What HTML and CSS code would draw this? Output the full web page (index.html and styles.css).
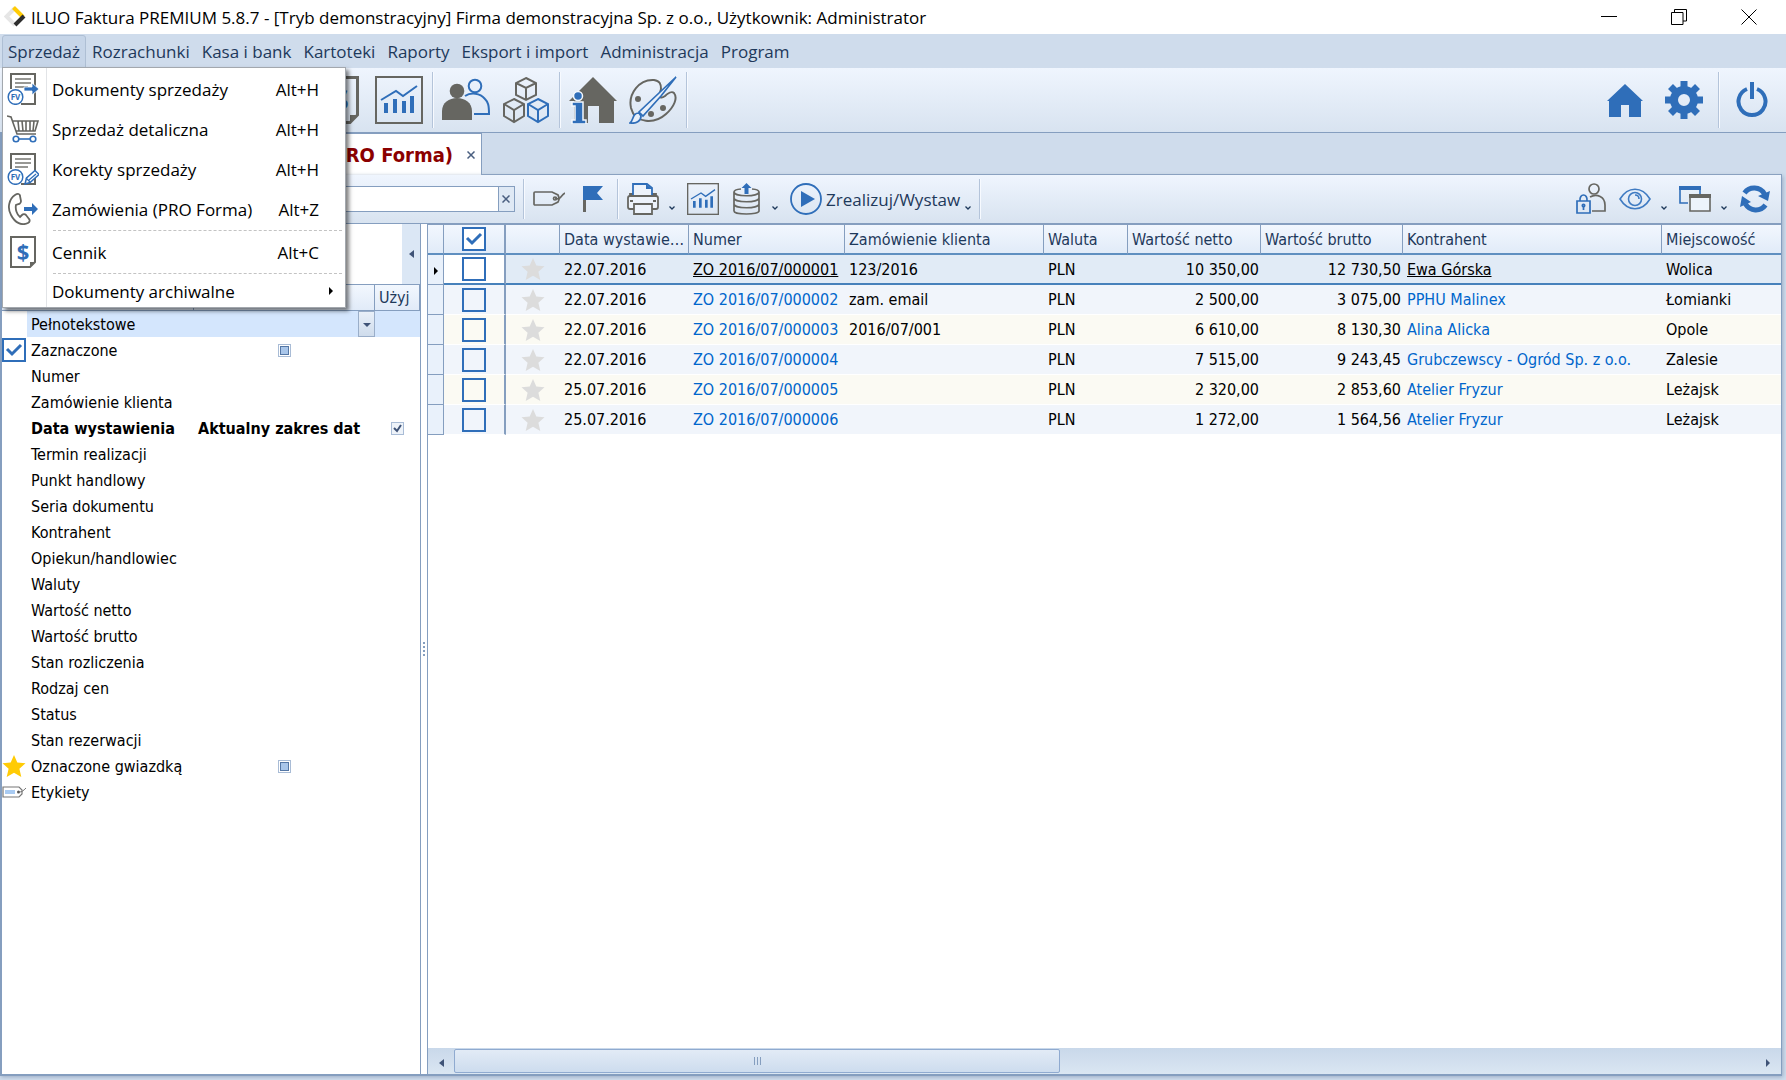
FILE: index.html
```html
<!DOCTYPE html>
<html lang="pl">
<head>
    <meta charset="UTF-8">
    <meta name="viewport" content="width=device-width, initial-scale=1.0">
    <title>ILUO Faktura PREMIUM 5.8.7</title>
    <link rel="stylesheet" href="styles.css">
</head>
<body>

<!-- shared icons -->
<svg class="defs" width="0" height="0">
    <symbol id="i-chart" viewBox="0 0 48 48">
        <rect x="1" y="1" width="46" height="46" fill="none" stroke="#666661" stroke-width="2"/>
        <path d="M6 24 21 15l7 5L42 10" fill="none" stroke="#2f6eb9" stroke-width="2"/>
        <path d="M9 27h4v10H9zM18 23h4v14h-4zM27 25h4v12h-4zM35 20h4v17h-4z" fill="#2f6eb9"/>
    </symbol>
    <symbol id="i-star" viewBox="0 0 24 24">
        <path d="M12 1l3.300 7.500 8.200.700-6.100 5.600 1.900 8.200-7.300-4.300L4.700 23l1.900-8.200L.500 9.200l8.200-.700z"/>
    </symbol>
    <symbol id="i-caret" viewBox="0 0 6 4">
        <path d="M.5.5 3 3 5.500.5" fill="none" stroke="#1e395b" stroke-width="1.300"/>
    </symbol>
    <symbol id="i-doc" viewBox="0 0 32 32">
        <path d="M4 16V1h24v30H14" fill="none" stroke="#666661" stroke-width="2"/>
        <path d="M8 6h16M8 10h16M8 14h13" stroke="#777772" stroke-width="1.500"/>
        <circle cx="8.500" cy="24" r="7.300" fill="#fff" stroke="#2f6eb9" stroke-width="1.500"/>
        <text x="8.500" y="27" text-anchor="middle" class="fv">FV</text>
    </symbol>
    <symbol id="i-price" viewBox="0 0 26 32">
        <path d="M1 1h24v25l-5 5H1z" fill="none" stroke="#666661" stroke-width="2"/>
        <path d="M25 26h-5v5z" fill="#666661"/>
        <text x="13" y="24" text-anchor="middle" class="dollar">$</text>
    </symbol>
</svg>

<header class="titlebar">
    <svg class="logo" viewBox="0 0 22 22">
        <path d="M11 2 2.500 10.500 11 19" fill="none" stroke="#e6e6e6" stroke-width="4"/>
        <path d="M9.500 1.500 19 11" fill="none" stroke="#ffcb05" stroke-width="4"/>
        <path d="M20 10l-9 9" fill="none" stroke="#2d2d2d" stroke-width="4"/>
    </svg>
    <h1>ILUO Faktura PREMIUM 5.8.7 - [Tryb demonstracyjny] Firma demonstracyjna Sp. z o.o., Użytkownik: Administrator</h1>
    <div class="window-buttons">
        <button type="button" aria-label="Minimalizuj"><svg viewBox="0 0 16 16"><path d="M0 7.500h16"/></svg></button>
        <button type="button" aria-label="Przywróć"><svg viewBox="0 0 16 16"><path d="M.5 3.500h11.500v12H.5zM3.500 3.500v-3h12v11.500H12"/></svg></button>
        <button type="button" aria-label="Zamknij"><svg viewBox="0 0 16 16"><path d="M.5.5l15 15M15.500.5l-15 15"/></svg></button>
    </div>
</header>

<nav class="menubar">
    <div class="menu-root">
        <button type="button" class="active">Sprzedaż</button>
        <div class="dropdown">
            <button type="button" class="menu-item">
                <svg viewBox="0 0 32 32"><use href="#i-doc"/><path d="M17 14h8v-4l7 6-7 6v-4h-8z" fill="#2f6eb9" stroke="#fff" stroke-width=".8"/></svg>
                <span>Dokumenty sprzedaży</span><kbd>Alt+H</kbd>
            </button>
            <button type="button" class="menu-item">
                <svg viewBox="0 0 32 32" fill="none" stroke="#666661" stroke-width="1.600"><path d="M0 3l4 1 6 17h19M6 8h25l-3 10H9M11 8l1 10M15 8l1 10M19 8v10M23 8v10M27 8l-1 10"/><g stroke="#2f6eb9"><circle cx="9" cy="26" r="2.800"/><circle cx="26" cy="26" r="2.800"/><path d="M12 26h11"/></g></svg>
                <span>Sprzedaż detaliczna</span><kbd>Alt+H</kbd>
            </button>
            <button type="button" class="menu-item">
                <svg viewBox="0 0 32 32"><use href="#i-doc"/><path d="M18 31l1.500-6L28 17.500l4 4-9 8z" fill="#fff" stroke="#2f6eb9" stroke-width="1.500"/><path d="M22 27l7-6M19 25l4 4" stroke="#2f6eb9" stroke-width="1.200"/></svg>
                <span>Korekty sprzedaży</span><kbd>Alt+H</kbd>
            </button>
            <button type="button" class="menu-item">
                <svg viewBox="0 0 32 32"><path d="M8 2C2 6 0 15 4 22c4 8 11 11 17 8 2-1 2-3 1-4l-3-4c-1-1-3-1-4 0l-2 2c-3-2-5-8-4-12l3-1c1 0 2-2 2-3l-1-5c0-2-2-3-5-1z" fill="none" stroke="#666661" stroke-width="1.800"/><path d="M17 14h8v-4l6 6-6 6v-4h-8z" fill="#2f6eb9"/></svg>
                <span>Zamówienia (PRO Forma)</span><kbd>Alt+Z</kbd>
            </button>
            <hr>
            <button type="button" class="menu-item">
                <svg viewBox="0 0 26 32"><use href="#i-price"/></svg>
                <span>Cennik</span><kbd>Alt+C</kbd>
            </button>
            <hr>
            <button type="button" class="menu-item short">
                <i></i>
                <span>Dokumenty archiwalne</span><b class="tri-right"></b>
            </button>
        </div>
    </div>
    <button type="button">Rozrachunki</button>
    <button type="button">Kasa i bank</button>
    <button type="button">Kartoteki</button>
    <button type="button">Raporty</button>
    <button type="button">Eksport i import</button>
    <button type="button">Administracja</button>
    <button type="button">Program</button>
</nav>

<div class="toolbar main-toolbar">
    <div class="tools-left">
        <button type="button" class="tool" aria-label="Cennik"><svg width="39" height="48" viewBox="0 0 26 32"><use href="#i-price"/></svg></button>
        <button type="button" class="tool" aria-label="Raporty"><svg width="48" height="48"><use href="#i-chart"/></svg></button>
        <span class="sep"></span>
        <button type="button" class="tool" aria-label="Kontrahenci">
            <svg width="48" height="48" viewBox="0 0 48 48"><g fill="none" stroke="#2f6eb9" stroke-width="2"><circle cx="33" cy="10" r="6.300"/><path d="M23 20c6-4 15-3 20 3 3 3 4 6 4 15H32"/></g><circle cx="15" cy="15" r="7.300" fill="#666661"/><path d="M0 44V35C0 27 7 22 15 22s15 5 15 13v9z" fill="#666661"/></svg>
        </button>
        <button type="button" class="tool" aria-label="Magazyn">
            <svg width="48" height="48" viewBox="0 0 48 48" fill="none" stroke="#666661" stroke-width="2"><path d="M24 2l10 5v12l-10 5-10-5V7zM14 7l10 5 10-5M24 12v12"/><path d="M12 23l10 5v12l-10 6-10-6V28zM2 28l10 6 10-6M12 34v12"/><path d="M36 23l10 5v12l-10 6-10-6V28zM26 28l10 6 10-6M36 34v12" stroke="#2f6eb9"/></svg>
        </button>
        <span class="sep"></span>
        <button type="button" class="tool" aria-label="Firma">
            <svg width="48" height="48" viewBox="0 0 48 48"><path d="M24 1l24 24h-3v22H30V30H19v17H5V25H0z" fill="#666661"/><g fill="#2f6eb9" stroke="#f4f8fd" stroke-width="1.500"><circle cx="9" cy="20" r="4.500"/><path d="M3 26h11v18h3v4H3v-4h3V30H3z"/></g></svg>
        </button>
        <button type="button" class="tool" aria-label="Wygląd">
            <svg width="48" height="48" viewBox="0 0 48 48"><path d="M32 13c0-5-1-8-7-9C10 3-1 18 2 32c4 16 24 16 35 6 8-7 12-16 8-21-2-2-6 0-9 3-4 3-7 2-4-7z" fill="none" stroke="#666661" stroke-width="2"/><g fill="#666661"><circle cx="9" cy="23" r="3"/><circle cx="22" cy="38" r="3"/><circle cx="34" cy="32" r="3"/></g><path d="M47 1L30 17 10 36l4 4L32 20z" fill="#e8f0fa" stroke="#2f6eb9" stroke-width="1.700"/><path d="M10 37c-7 0-5 7-9 10 6 1 11-2 11-7z" fill="#e8f0fa" stroke="#2f6eb9" stroke-width="1.700"/></svg>
        </button>
        <span class="sep"></span>
    </div>
    <div class="tools-right">
        <button type="button" class="tool" aria-label="Strona główna">
            <svg width="36" height="36" viewBox="0 0 36 36"><path d="M18 2l18 17h-2v16H22V23h-8v12H2V19H0z" fill="#2f6eb9"/></svg>
        </button>
        <button type="button" class="tool" aria-label="Ustawienia">
            <svg width="38" height="38" viewBox="0 0 38 38"><circle cx="19" cy="19" r="10" fill="none" stroke="#2f6eb9" stroke-width="8"/><path d="M19 0v10M19 28v10M0 19h10M28 19h10M5.500 5.500l7 7M25.500 25.500l7 7M5.500 32.500l7-7M25.500 12.500l7-7" stroke="#2f6eb9" stroke-width="7"/></svg>
        </button>
        <span class="sep"></span>
        <button type="button" class="tool" aria-label="Zakończ">
            <svg width="32" height="38" viewBox="0 0 32 38" fill="none" stroke="#2f6eb9" stroke-width="4"><path d="M11 8a13.500 13.500 0 1 0 10 0M16 1v17"/></svg>
        </button>
    </div>
</div>

<div class="tabs">
    <div class="tab"><span>Zamówienia (PRO Forma)</span><button type="button" aria-label="Zamknij kartę"><svg viewBox="0 0 8 8"><path d="M.5.5l7 7M7.500.5l-7 7"/></svg></button></div>
    <div class="tab-space"></div>
</div>

<main class="panel">
    <div class="toolbar panel-toolbar">
        <div class="tools-left">
            <div class="search">
                <input type="text" aria-label="Szukaj">
                <button type="button" aria-label="Wyczyść"><svg viewBox="0 0 8 8"><path d="M.5.5l7 7M7.500.5l-7 7"/></svg></button>
            </div>
            <span class="sep"></span>
            <button type="button" class="tool" aria-label="Etykieta">
                <svg width="32" height="32" viewBox="0 0 32 32" fill="none" stroke="#666661" stroke-width="1.700"><path d="M2 9h17l6 3q2 4 0 7l-6 3H2q-1 0-1-1V10q0-1 1-1z"/><circle cx="22" cy="15.500" r="1.500"/><path d="M22 15c6 3 5-2 10-5"/></svg>
            </button>
            <button type="button" class="tool flag" aria-label="Flaga">
                <svg width="32" height="32" viewBox="0 0 32 32"><path d="M6 16h3v13H6z" fill="#666661"/><path d="M6 3h20l-6 7 6 7H6z" fill="#2f6eb9"/></svg>
            </button>
            <span class="sep"></span>
            <button type="button" class="tool" aria-label="Drukuj">
                <svg width="32" height="32" viewBox="0 0 32 32" fill="#edf3fb" stroke="#666661" stroke-width="1.800"><path d="M3 11h26v4H3z"/><path d="M6 14V1h14l5 4v9" stroke="#2f6eb9"/><path d="M19 1v5h6z" fill="#2f6eb9" stroke="none"/><path d="M3 13h26q2 0 2 2v9q0 2-2 2H3q-2 0-2-2v-9q0-2 2-2z"/><path d="M7 21h18v10H7z"/><path d="M3 18h3M26 18h3"/></svg>
            </button>
            <svg class="caret"><use href="#i-caret"/></svg>
            <button type="button" class="tool" aria-label="Wykres"><svg width="32" height="32"><use href="#i-chart"/></svg></button>
            <button type="button" class="tool export" aria-label="Eksport">
                <svg width="32" height="32" viewBox="0 0 32 32" fill="none" stroke="#666661" stroke-width="1.700"><path d="M11 6C6 6.500 4 7.500 4 9c0 5 25 5 25 0 0-1.500-2-2.500-7-3M4 9v19c0 4 25 4 25 0V9M4 15c0 5 25 5 25 0M4 21c0 5 25 5 25 0"/><path d="M16.500 0l5 5h-3v6h-4V5h-3z" fill="#2f6eb9" stroke="none"/></svg>
            </button>
            <svg class="caret"><use href="#i-caret"/></svg>
            <button type="button" class="tool issue">
                <svg width="32" height="32" viewBox="0 0 32 32"><circle cx="16" cy="16" r="15" fill="none" stroke="#2f6eb9" stroke-width="1.800"/><path d="M11 8l14 8-14 8z" fill="#2f6eb9"/></svg>
                <span>Zrealizuj/Wystaw</span>
            </button>
            <svg class="caret near"><use href="#i-caret"/></svg>
            <span class="sep"></span>
        </div>
        <div class="tools-right">
            <button type="button" class="tool lock" aria-label="Uprawnienia">
                <svg width="32" height="32" viewBox="0 0 32 32" fill="none" stroke="#666661" stroke-width="1.700"><circle cx="19" cy="6" r="5"/><path d="M15 14c7-4 15 0 15 8v6H17"/><g stroke="#2f6eb9"><path d="M2 18h13v12H2zM5 18c-1-8 8-8 7 0"/><circle cx="8.500" cy="22.500" r="1.200"/><path d="M8.500 23v4"/></g></svg>
            </button>
            <button type="button" class="tool" aria-label="Widok">
                <svg width="32" height="32" viewBox="0 0 32 32" fill="none" stroke="#3f7bc2" stroke-width="1.600"><path d="M1 16C9 3 23 3 31 16 23 29 9 29 1 16z"/><circle cx="16" cy="16" r="6.500"/><path d="M16 12q4 0 4 4"/></svg>
            </button>
            <svg class="caret"><use href="#i-caret"/></svg>
            <button type="button" class="tool" aria-label="Okna">
                <svg width="32" height="32" viewBox="0 0 32 32" fill="none"><path d="M9 20H1V4h20v7" stroke="#2f6eb9" stroke-width="1.600"/><path d="M0 3h22v4H0z" fill="#2f6eb9"/><path d="M11 12h20v16H11z" fill="#edf3fb" stroke="#666661" stroke-width="1.600"/><path d="M10 11h22v4H10z" fill="#666661"/></svg>
            </button>
            <svg class="caret"><use href="#i-caret"/></svg>
            <button type="button" class="tool" aria-label="Odśwież">
                <svg width="32" height="32" viewBox="0 0 32 32"><path d="M5.500 10a12 12 0 0 1 20 1M26.500 22a12 12 0 0 1-20-1" fill="none" stroke="#2f6eb9" stroke-width="5"/><path d="M31 8l-2 10-10-5zM1 24l2-11 9 6z" fill="#2f6eb9"/></svg>
            </button>
        </div>
    </div>

    <div class="content">
        <aside class="sidebar">
            <div class="sidebar-top"><button type="button" class="collapse" aria-label="Zwiń"><b class="tri-left"></b></button></div>
            <table class="filters">
                <colgroup><col class="f-icon"><col class="f-name"><col class="f-value"><col></colgroup>
                <thead><tr><th></th><th></th><th></th><th>Użyj</th></tr></thead>
                <tbody>
                    <tr class="current"><td></td><td>Pełnotekstowe</td><td class="with-button"><button type="button" aria-label="Rozwiń"><b class="tri-down"></b></button></td><td></td></tr>
                    <tr><td><input type="checkbox" class="check" aria-label="Zaznaczone wiersze" checked></td><td>Zaznaczone</td><td><input type="checkbox" class="mini mixed" aria-label="Zaznaczone"></td><td></td></tr>
                    <tr><td></td><td>Numer</td><td></td><td></td></tr>
                    <tr><td></td><td>Zamówienie klienta</td><td></td><td></td></tr>
                    <tr class="used"><td></td><td>Data wystawienia</td><td>Aktualny zakres dat</td><td><input type="checkbox" class="mini" aria-label="Użyj daty wystawienia" checked></td></tr>
                    <tr><td></td><td>Termin realizacji</td><td></td><td></td></tr>
                    <tr><td></td><td>Punkt handlowy</td><td></td><td></td></tr>
                    <tr><td></td><td>Seria dokumentu</td><td></td><td></td></tr>
                    <tr><td></td><td>Kontrahent</td><td></td><td></td></tr>
                    <tr><td></td><td>Opiekun/handlowiec</td><td></td><td></td></tr>
                    <tr><td></td><td>Waluty</td><td></td><td></td></tr>
                    <tr><td></td><td>Wartość netto</td><td></td><td></td></tr>
                    <tr><td></td><td>Wartość brutto</td><td></td><td></td></tr>
                    <tr><td></td><td>Stan rozliczenia</td><td></td><td></td></tr>
                    <tr><td></td><td>Rodzaj cen</td><td></td><td></td></tr>
                    <tr><td></td><td>Status</td><td></td><td></td></tr>
                    <tr><td></td><td>Stan rezerwacji</td><td></td><td></td></tr>
                    <tr><td><svg class="star gold"><use href="#i-star"/></svg></td><td>Oznaczone gwiazdką</td><td><input type="checkbox" class="mini mixed" aria-label="Oznaczone gwiazdką"></td><td></td></tr>
                    <tr><td><svg class="label-icon" viewBox="0 0 24 12"><path d="M1 1h16l3 3v4l-3 3H1z" fill="#fff" stroke="#777" stroke-width="1.200"/><path d="M3 4h10v4H3z" fill="#a9cbf2"/><circle cx="16.500" cy="6" r="1.500" fill="#555"/><path d="M17 6c3 0 4-1 7-4" fill="none" stroke="#777"/></svg></td><td>Etykiety</td><td></td><td></td></tr>
                </tbody>
            </table>
        </aside>
        <div class="splitter"></div>
        <section class="grid">
            <table class="orders">
                <colgroup><col class="c-mark"><col class="c-check"><col class="c-star"><col class="c-date"><col class="c-number"><col class="c-order"><col class="c-currency"><col class="c-net"><col class="c-gross"><col class="c-client"><col></colgroup>
                <thead>
                    <tr><th></th><th><input type="checkbox" class="check" aria-label="Zaznacz wszystkie" checked></th><th></th><th>Data wystawienia</th><th>Numer</th><th>Zamówienie klienta</th><th>Waluta</th><th>Wartość netto</th><th>Wartość brutto</th><th>Kontrahent</th><th>Miejscowość</th></tr>
                </thead>
                <tbody>
                    <tr class="selected"><td><b class="tri-right"></b></td><td><input type="checkbox" class="check" aria-label="Zaznacz wiersz 1"></td><td><svg class="star"><use href="#i-star"/></svg></td><td>22.07.2016</td><td><a href="#">ZO 2016/07/000001</a></td><td>123/2016</td><td>PLN</td><td class="num">10 350,00</td><td class="num">12 730,50</td><td><a href="#">Ewa Górska</a></td><td>Wolica</td></tr>
                    <tr><td></td><td><input type="checkbox" class="check" aria-label="Zaznacz wiersz 2"></td><td><svg class="star"><use href="#i-star"/></svg></td><td>22.07.2016</td><td><a href="#">ZO 2016/07/000002</a></td><td>zam. email</td><td>PLN</td><td class="num">2 500,00</td><td class="num">3 075,00</td><td><a href="#">PPHU Malinex</a></td><td>Łomianki</td></tr>
                    <tr><td></td><td><input type="checkbox" class="check" aria-label="Zaznacz wiersz 3"></td><td><svg class="star"><use href="#i-star"/></svg></td><td>22.07.2016</td><td><a href="#">ZO 2016/07/000003</a></td><td>2016/07/001</td><td>PLN</td><td class="num">6 610,00</td><td class="num">8 130,30</td><td><a href="#">Alina Alicka</a></td><td>Opole</td></tr>
                    <tr><td></td><td><input type="checkbox" class="check" aria-label="Zaznacz wiersz 4"></td><td><svg class="star"><use href="#i-star"/></svg></td><td>22.07.2016</td><td><a href="#">ZO 2016/07/000004</a></td><td></td><td>PLN</td><td class="num">7 515,00</td><td class="num">9 243,45</td><td><a href="#">Grubczewscy - Ogród Sp. z o.o.</a></td><td>Zalesie</td></tr>
                    <tr><td></td><td><input type="checkbox" class="check" aria-label="Zaznacz wiersz 5"></td><td><svg class="star"><use href="#i-star"/></svg></td><td>25.07.2016</td><td><a href="#">ZO 2016/07/000005</a></td><td></td><td>PLN</td><td class="num">2 320,00</td><td class="num">2 853,60</td><td><a href="#">Atelier Fryzur</a></td><td>Leżajsk</td></tr>
                    <tr><td></td><td><input type="checkbox" class="check" aria-label="Zaznacz wiersz 6"></td><td><svg class="star"><use href="#i-star"/></svg></td><td>25.07.2016</td><td><a href="#">ZO 2016/07/000006</a></td><td></td><td>PLN</td><td class="num">1 272,00</td><td class="num">1 564,56</td><td><a href="#">Atelier Fryzur</a></td><td>Leżajsk</td></tr>
                </tbody>
            </table>
            <div class="scrollbar">
                <button type="button" aria-label="Przewiń w lewo"><b class="tri-left"></b></button>
                <div class="track"><div class="thumb"><i></i></div></div>
                <button type="button" aria-label="Przewiń w prawo"><b class="tri-right"></b></button>
            </div>
        </section>
    </div>
</main>

</body>
</html>
```
FILE: styles.css
```css
* {
    box-sizing: border-box;
}
body {
    margin: 0;
    min-height: 100vh;
    display: flex;
    flex-direction: column;
    background: #cfdcec;
    color: #000;
    font-family: "Open Sans", "Noto Sans", sans-serif;
    font-size: 17px;
}
button {
    margin: 0;
    padding: 0;
    border: 0;
    background: none;
    color: inherit;
    font: inherit;
}
svg {
    display: block;
}
.defs {
    display: none;
}
.fv {
    font: bold 8px "Open Sans", sans-serif;
    fill: #2f6eb9;
}
.dollar {
    font: bold 22px "Open Sans", sans-serif;
    fill: #2f6eb9;
}

/* title bar */
.titlebar {
    display: flex;
    height: 34px;
    padding: 0 2px 0 4px;
    background: #fff;
}
.titlebar h1 {
    flex: 1;
    margin: 0 0 0 5px;
    font-size: 17px;
    font-weight: normal;
    line-height: 35px;
    white-space: nowrap;
}
.logo {
    width: 22px;
    height: 22px;
    margin-top: 6px;
}
.window-buttons {
    display: flex;
}
.window-buttons button {
    width: 70px;
    height: 33px;
    display: flex;
    align-items: center;
    justify-content: center;
}
.window-buttons svg {
    width: 16px;
    height: 16px;
    fill: none;
    stroke: #000;
}

/* menu */
.menubar {
    display: flex;
    height: 34px;
    padding: 1px 2px 0;
    color: #1e395b;
}
.menubar > button, .menu-root > button {
    height: 33px;
    padding: 0 5px;
    border: 1px solid transparent;
    border-radius: 3px 3px 0 0;
}
.menu-root > .active {
    border-color: #aebfd4;
    background: #c6d5e8;
}
.menu-root {
    position: relative;
}
.dropdown {
    position: absolute;
    z-index: 10;
    top: 32px;
    left: 0;
    width: 344px;
    padding-top: 1px;
    border: 1px solid #a3a8ae;
    background: linear-gradient(to right, #fff 43px, #e2e4e7 43px, #e2e4e7 44px, #fff 44px);
    box-shadow: 3px 3px 4px rgba(0, 0, 0, 0.5);
    color: #000;
}
.menu-item {
    display: flex;
    align-items: center;
    width: 100%;
    height: 40px;
    padding: 0 26px 0 4px;
    text-align: left;
}
.menu-item.short {
    height: 32px;
    padding-right: 12px;
}
.menu-item svg, .menu-item i {
    width: 32px;
    height: 32px;
}
.menu-item span {
    flex: 1;
    margin-left: 13px;
}
.menu-item kbd {
    font: inherit;
}
.dropdown hr {
    margin: 1px 3px 1px 50px;
    border: 0;
    border-top: 1px dashed #c3c3c3;
}

/* toolbars */
.toolbar {
    display: flex;
    justify-content: space-between;
    background: linear-gradient(#eff5fe, #d8e3f0);
}
.tools-left, .tools-right {
    display: flex;
    align-items: center;
}
.main-toolbar {
    height: 65px;
    border-bottom: 1px solid #859ebf;
    padding: 0 18px 0 320px;
}
.main-toolbar .tools-left {
    gap: 12px;
}
.main-toolbar .tools-left .tool:first-child {
    margin-right: 4px;
}
.main-toolbar .tools-right {
    gap: 22px;
}
.sep {
    width: 2px;
    height: 56px;
    border-left: 1px solid #b4c4da;
    border-right: 1px solid #f7faff;
}
.main-toolbar .tools-left .sep {
    margin: 0 -4px 0 -3px;
}
.main-toolbar .tools-right .sep {
    margin: 0 -6px 0 -7px;
}

/* tabs */
.tabs {
    display: flex;
    height: 42px;
}
.tab {
    display: flex;
    align-items: center;
    justify-content: flex-end;
    gap: 14px;
    width: 482px;
    padding-right: 6px;
    border: 1px solid #859ebf;
    border-width: 1px 1px 0 2px;
    background: #fff;
    color: #8b0000;
    font: bold 20px "DejaVu Sans Condensed", "Noto Sans", sans-serif;
}
.tab-space {
    flex: 1;
    margin-right: 4px;
    border-bottom: 1px solid #859ebf;
}
.tab svg, .search svg {
    width: 8px;
    height: 8px;
    stroke: #4a5f80;
    stroke-width: 1.5;
}

/* panel */
.panel {
    flex: 1;
    display: flex;
    flex-direction: column;
    margin: 0 4px 4px 0;
    border: 2px solid #859ebf;
    border-width: 0 1px 2px 2px;
    background: #fff;
    box-shadow: 1px 1px 4px #9aabc4;
}
.panel-toolbar {
    height: 49px;
    padding: 0 10px 0 6px;
    border-bottom: 1px solid #859ebf;
}
.panel-toolbar .tools-left, .panel-toolbar .tools-right {
    gap: 8px;
}
.panel-toolbar .sep {
    height: 40px;
}
.search {
    display: flex;
    width: 507px;
    height: 26px;
    border: 1px solid #859ebf;
    background: #fff;
}
.search input {
    flex: 1;
    min-width: 0;
    padding: 0 4px;
    border: 0;
    font: inherit;
}
.search button {
    width: 16px;
    padding: 0 3px;
    border-left: 1px solid #859ebf;
    background: #dfe9f5;
}
.flag {
    margin-left: 4px;
}
.export {
    margin-left: 3px;
}
.lock {
    margin-right: 4px;
}
.caret {
    width: 6px;
    height: 4px;
    margin: 18px 4px 0 2px;
}
.caret.near {
    margin: 18px 0 0 -3px;
}
.issue {
    display: flex;
    align-items: center;
    gap: 4px;
    color: #1e395b;
}

/* filters */
.content {
    flex: 1;
    display: flex;
}
.sidebar {
    width: 419px;
    border-right: 1px solid #859ebf;
    font: 16px "DejaVu Sans Condensed", "Noto Sans", sans-serif;
}
.sidebar-top {
    display: flex;
    justify-content: flex-end;
    height: 60px;
}
.collapse {
    display: flex;
    align-items: center;
    justify-content: center;
    width: 18px;
    background: #dbe7f5;
}
.filters, .orders {
    width: 100%;
    border-spacing: 0;
    table-layout: fixed;
    white-space: nowrap;
}
.f-icon {
    width: 25px;
}
.f-name {
    width: 167px;
}
.f-value {
    width: 181px;
}
.filters th {
    height: 27px;
    padding: 0 0 0 4px;
    border: 1px solid #859ebf;
    border-left: 0;
    background: linear-gradient(#f2f7fe, #e1ebf8);
    color: #1e395b;
    font-weight: normal;
    text-align: left;
}
.filters th:first-child {
    border-right: 0;
}
.filters td {
    height: 26px;
    padding: 0 0 0 4px;
}
.filters td:first-child {
    padding: 0;
}
.filters .current td:not(:first-child) {
    background: #d4e6fd;
}
.filters .used {
    font-weight: bold;
}
.filters .with-button {
    text-align: right;
}
.with-button button {
    width: 17px;
    height: 26px;
    border: 1px solid #9aaec9;
    background: linear-gradient(#e9f0f9, #cfdcec);
    vertical-align: top;
}
.tri-left, .tri-right, .tri-down {
    display: inline-block;
    border: 4px solid transparent;
}
.tri-left {
    border-right: 5px solid #3f5377;
    border-left: 0;
}
.tri-right {
    border-left: 4px solid #000;
    border-right: 0;
}
.tri-down {
    border-top: 4px solid #3f5377;
    border-bottom: 0;
    vertical-align: middle;
}
.check {
    display: block;
    appearance: none;
    width: 24px;
    height: 24px;
    margin: 0 auto;
    border: 2px solid #2f6eb9;
    background: #fff center / 20px no-repeat;
}
tbody tr:not(.selected) .check {
    background-color: transparent;
}
.check:checked {
    background-image: url("data:image/svg+xml,%3Csvg xmlns='http://www.w3.org/2000/svg' viewBox='0 0 20 20'%3E%3Cpath d='M3 9l5 5 9-9' fill='none' stroke='%232f6eb9' stroke-width='3'/%3E%3C/svg%3E");
}
.mini {
    display: block;
    appearance: none;
    width: 13px;
    height: 13px;
    margin: 0 auto;
    border: 1px solid #a9bcd6;
    background: #eef3f9 center / 11px no-repeat;
}
.mini.mixed {
    box-shadow: inset 0 0 0 1px #fff, inset 0 0 0 2px #5577a5;
    background: #a9c6ea;
}
.mini:checked {
    background-image: url("data:image/svg+xml,%3Csvg xmlns='http://www.w3.org/2000/svg' viewBox='0 0 11 11'%3E%3Cpath d='M2 5l3 3 4-6' fill='none' stroke='%233f5377' stroke-width='2'/%3E%3C/svg%3E");
}
.filters td:has(.mini) {
    padding: 0;
}
.star {
    width: 24px;
    height: 24px;
    margin: 0 auto;
    fill: #dcdcdc;
}
.star.gold {
    fill: #ffcb05;
}
.filters .star, .filters .check {
    margin: 0;
}
.label-icon {
    width: 24px;
    height: 12px;
}
.splitter {
    display: flex;
    align-items: center;
    justify-content: center;
    width: 6px;
}
.splitter::before {
    content: "";
    width: 2px;
    height: 14px;
    background: repeating-linear-gradient(#859ebf 0 2px, transparent 2px 4px);
}

/* orders */
.grid {
    flex: 1;
    display: flex;
    flex-direction: column;
    justify-content: space-between;
    border-top: 1px solid #859ebf;
    border-left: 1px solid #859ebf;
    font: 16px "DejaVu Sans Condensed", "Noto Sans", sans-serif;
}
.c-mark {
    width: 16px;
}
.c-check {
    width: 62px;
}
.c-star {
    width: 54px;
}
.c-date {
    width: 129px;
}
.c-number {
    width: 156px;
}
.c-order {
    width: 199px;
}
.c-currency {
    width: 84px;
}
.c-net {
    width: 133px;
}
.c-gross {
    width: 142px;
}
.c-client {
    width: 259px;
}
.orders th {
    height: 30px;
    padding: 0 0 0 4px;
    border-right: 1px solid #859ebf;
    border-bottom: 2px solid #5f8fc0;
    background: linear-gradient(#f2f7fe, #e1ebf8);
    color: #1e395b;
    font-weight: normal;
    text-align: left;
    overflow: hidden;
    text-overflow: ellipsis;
}
.orders th:last-child {
    border-right: 0;
}
.orders td {
    height: 30px;
    padding: 0 0 0 4px;
    border-bottom: 1px solid #fff;
    background: #f1f5fb;
}
.orders tr:nth-child(odd) td {
    background: #fbfaf3;
}
.orders tr td:first-child {
    padding: 0;
    border-right: 1px solid #859ebf;
    border-bottom: 1px solid #859ebf;
    background: #e9f1fb;
    line-height: 16px;
    text-align: center;
}
.orders th:nth-child(2), .orders td:nth-child(2) {
    padding: 0;
    border-right: 2px solid #859ebf;
}
.orders td:nth-child(3) {
    padding: 0;
}
.orders tbody .selected td:not(:first-child) {
    border-bottom: 2px solid #4781bb;
    background: #e1ebf6;
}
.orders tbody .selected td:nth-child(2) {
    background: #fff;
}
.orders td.num {
    padding: 0 2px 0 0;
    text-align: right;
}
.orders a {
    color: #0066cc;
    text-decoration: none;
}
.orders .selected a {
    color: #000;
    text-decoration: underline;
}

/* scrollbar */
.scrollbar {
    display: flex;
    height: 26px;
    background: linear-gradient(#c9d8ea, #dae6f2);
}
.scrollbar button {
    width: 26px;
}
.scrollbar .tri-right {
    border-left-color: #3f5377;
}
.track {
    flex: 1;
}
.thumb {
    display: flex;
    align-items: center;
    justify-content: center;
    width: 46.6%;
    height: 24px;
    margin-top: 1px;
    border: 1px solid #8faad0;
    border-radius: 2px;
    background: linear-gradient(#e2ebf6, #cddcee);
}
.thumb i {
    width: 7px;
    height: 8px;
    background: repeating-linear-gradient(to right, #859ebf 0 1px, transparent 1px 3px);
}
```
